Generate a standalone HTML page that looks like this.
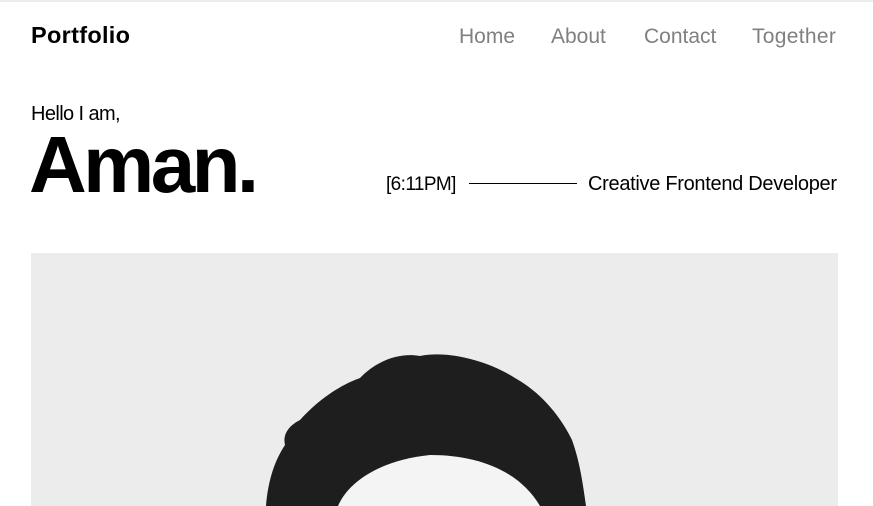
<!DOCTYPE html>
<html><head><style>
*{margin:0;padding:0;box-sizing:border-box}
body{width:873px;height:506px;overflow:hidden;background:#fff;font-family:"Liberation Sans",sans-serif;color:#000;position:relative}
.abs{position:absolute;white-space:nowrap}
.topb{left:0;top:0;width:873px;height:2px;background:#ececec}
.logo{left:31px;top:22px;font-size:23.5px;font-weight:bold;letter-spacing:0.3px}
.nav{top:25px;font-size:21px;color:#808080}
.hello{left:31px;top:103px;font-size:20px;letter-spacing:-0.6px}
.name{left:29px;top:120px;font-size:80px;font-weight:bold;letter-spacing:-3.6px;line-height:90px}
.time{left:386px;top:174px;font-size:19px;letter-spacing:-0.6px}
.line{left:469px;top:183px;width:108px;height:1px;background:#000}
.role{left:588px;top:173px;font-size:20px;letter-spacing:-0.3px}
.photo{left:31px;top:253px;width:807px;height:253px;background:#ececec;overflow:hidden}
</style></head><body>
<div class="abs topb"></div>
<div class="abs logo">Portfolio</div>
<div class="abs nav" style="left:459px">Home</div>
<div class="abs nav" style="left:551px">About</div>
<div class="abs nav" style="left:644px">Contact</div>
<div class="abs nav" style="left:752px;letter-spacing:0.3px">Together</div>
<div class="abs hello">Hello I am,</div>
<div class="abs name">Aman.</div>
<div class="abs time">[6:11PM]</div>
<div class="abs line"></div>
<div class="abs role">Creative Frontend Developer</div>
<div class="abs photo">
<svg width="807" height="253" viewBox="31 253 807 253">
<path d="M266 506 C268 480 275 460 285 445 C282 432 292 424 300 420 C318 400 340 385 360 378 C375 362 398 352 420 356 C450 350 490 362 515 378 C540 392 560 415 572 440 C580 462 583 485 586 506 Z" fill="#1e1e1e"/>
<path d="M338 506 C348 482 380 460 430 455 C480 455 520 472 540 506 Z" fill="#f4f4f4"/>
</svg>
</div>
</body></html>
